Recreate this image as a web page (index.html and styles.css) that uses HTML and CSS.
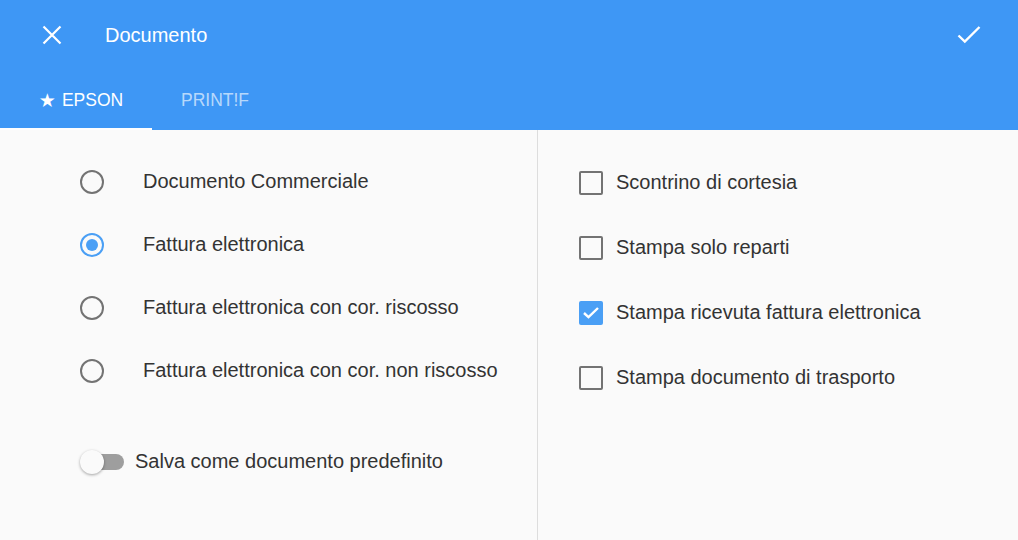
FILE: index.html
```html
<!DOCTYPE html>
<html lang="it">
<head>
<meta charset="UTF-8">
<meta name="viewport" content="width=device-width, initial-scale=1.0">
<title>Documento</title>
<link rel="stylesheet" href="styles.css">
</head>
<body>

<div class="dialog">
    <div class="appbar">
        <div class="toolbar">
            <span class="icon-btn close">
                <svg width="20" height="20" viewBox="0 0 20 20"><path d="M1.5 1.5L18.5 18.5M18.5 1.5L1.5 18.5" stroke="#fff" stroke-width="2.2" fill="none"/></svg>
            </span>
            <div class="title">Documento</div>
            <span class="icon-btn done">
                <svg width="24" height="18" viewBox="0 0 24 18"><path d="M1.5 9.5L7.8 15.5L22.5 1" stroke="#fff" stroke-width="2.4" fill="none"/></svg>
            </span>
        </div>
        <div class="tabs">
            <div class="tab active"><span class="star">★</span>EPSON</div>
            <div class="tab">PRINT!F</div>
        </div>
    </div>

    <div class="content">
        <div class="col left">
            <div class="radio-row">
                <span class="radio"></span>
                <span class="label">Documento Commerciale</span>
            </div>
            <div class="radio-row">
                <span class="radio checked"></span>
                <span class="label">Fattura elettronica</span>
            </div>
            <div class="radio-row">
                <span class="radio"></span>
                <span class="label">Fattura elettronica con cor. riscosso</span>
            </div>
            <div class="radio-row">
                <span class="radio"></span>
                <span class="label">Fattura elettronica con cor. non riscosso</span>
            </div>

            <div class="switch-row">
                <span class="switch"><span class="knob"></span></span>
                <span class="label">Salva come documento predefinito</span>
            </div>
        </div>

        <div class="col right">
            <div class="check-row">
                <span class="checkbox"></span>
                <span class="label">Scontrino di cortesia</span>
            </div>
            <div class="check-row">
                <span class="checkbox"></span>
                <span class="label">Stampa solo reparti</span>
            </div>
            <div class="check-row">
                <span class="checkbox checked">
                    <svg width="18" height="14" viewBox="0 0 18 14"><path d="M2 7L6.5 11.2L16 2" stroke="#fff" stroke-width="2.4" fill="none"/></svg>
                </span>
                <span class="label">Stampa ricevuta fattura elettronica</span>
            </div>
            <div class="check-row">
                <span class="checkbox"></span>
                <span class="label">Stampa documento di trasporto</span>
            </div>
        </div>
    </div>
</div>

</body>
</html>
```

FILE: styles.css
```css
body {
    margin: 0;
    background-color: #fafafa;
    font-family: "Liberation Sans", Arial, sans-serif;
    color: #333;
}
.dialog {
    width: 1018px;
    height: 540px;
    display: flex;
    flex-direction: column;
}
.appbar {
    background-color: #3e97f5;
    color: white;
}
.toolbar {
    height: 70px;
    display: flex;
    align-items: center;
    padding: 0 37px 0 42px;
}
.icon-btn {
    display: flex;
}
.title {
    flex: 1;
    margin-left: 43px;
    font-size: 20px;
}
.tabs {
    height: 60px;
    display: flex;
}
.tab {
    display: flex;
    align-items: center;
    justify-content: center;
    padding: 2px 29px 0;
    font-size: 17.5px;
    color: rgba(255, 255, 255, 0.65);
    border-bottom: 2px solid transparent;
    box-sizing: border-box;
}
.tab.active {
    width: 152px;
    padding: 2px 24px 0 34px;
    color: white;
    border-bottom-color: white;
}
.star {
    font-family: "DejaVu Sans", sans-serif;
    font-size: 19px;
    margin-right: 6px;
}
.content {
    flex: 1;
    display: grid;
    grid-template-columns: 537px 1fr;
}
.col {
    padding-top: 20px;
}
.left {
    padding-left: 80px;
}
.right {
    border-left: 1px solid #ddd;
    padding-left: 41px;
}
.label {
    font-size: 20px;
}
.radio-row {
    height: 63px;
    display: flex;
    align-items: center;
}
.radio-row .label {
    margin-left: 39px;
}
.radio {
    width: 24px;
    height: 24px;
    box-sizing: border-box;
    border: 2.5px solid #737373;
    border-radius: 50%;
    display: flex;
    align-items: center;
    justify-content: center;
}
.radio.checked {
    border-color: #4a9ff5;
}
.radio.checked::after {
    content: "";
    width: 12px;
    height: 12px;
    border-radius: 50%;
    background-color: #4a9ff5;
}
.switch-row {
    display: flex;
    align-items: center;
    margin-top: 48px;
}
.switch {
    position: relative;
    width: 42px;
    height: 16px;
    margin-left: 2px;
    border-radius: 8px;
    background-color: #9e9e9e;
}
.knob {
    position: absolute;
    left: -2px;
    top: -4px;
    width: 24px;
    height: 24px;
    border-radius: 50%;
    background-color: #fafafa;
    box-shadow: 0 1px 3px rgba(0, 0, 0, 0.35);
}
.switch-row .label {
    margin-left: 11px;
}
.check-row {
    height: 65px;
    display: flex;
    align-items: center;
}
.check-row .label {
    margin-left: 13px;
}
.checkbox {
    width: 24px;
    height: 24px;
    box-sizing: border-box;
    border: 2.5px solid #737373;
    border-radius: 2px;
    display: flex;
    align-items: center;
    justify-content: center;
}
.checkbox.checked {
    border: none;
    background-color: #4a9ff5;
}
```
